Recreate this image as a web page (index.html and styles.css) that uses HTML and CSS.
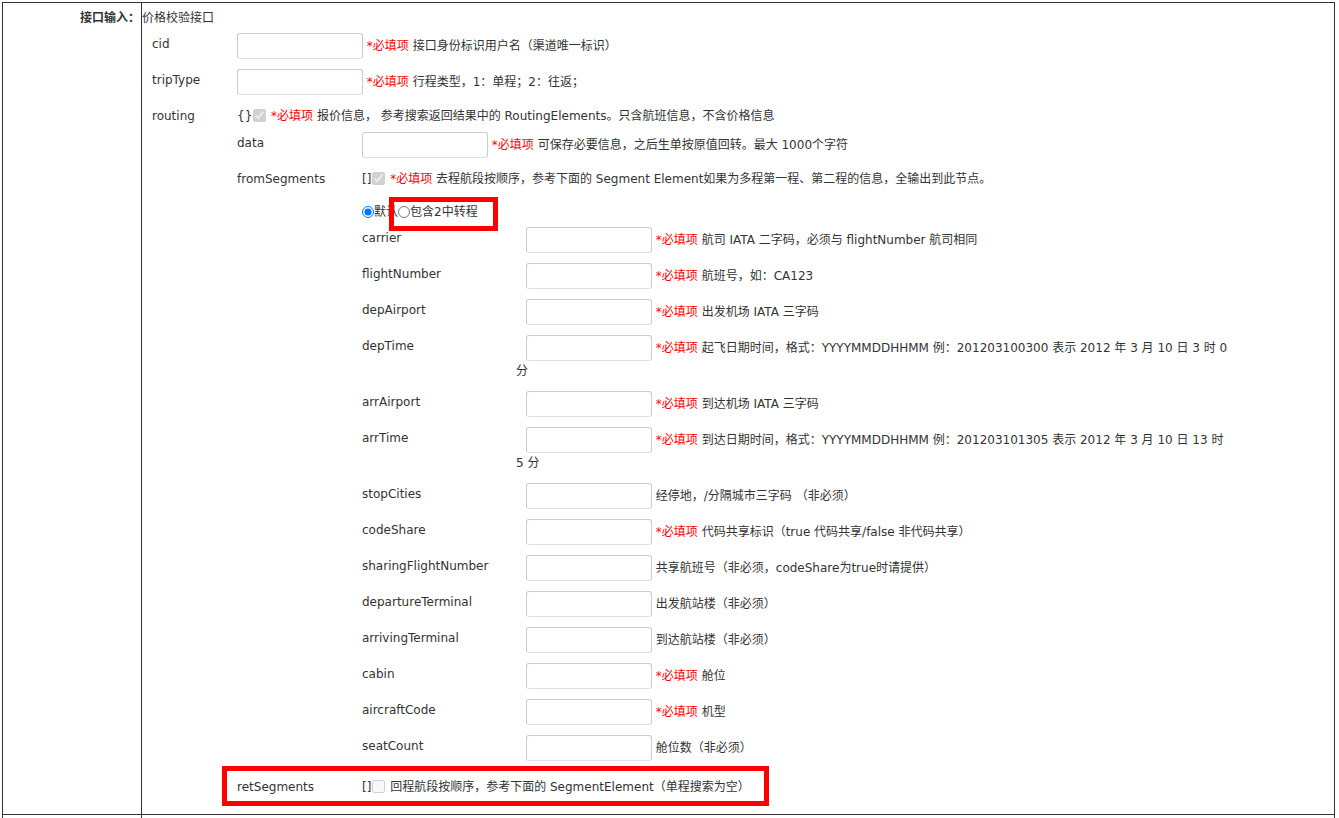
FILE: index.html
```html
<!DOCTYPE html>
<html lang="zh-CN">
<head>
  <meta charset="UTF-8">
  <title>接口输入 - 价格校验接口</title>
  <link rel="stylesheet" href="styles.css">
</head>
<body>
  <div class="form-table">
    <div class="form-row">
      <div class="form-label">接口输入：</div>
      <div class="form-value">
        <div class="title">价格校验接口</div>

        <!-- top level params -->
        <div class="fields">
          <div class="field">
            <div class="field-name">cid</div>
            <div class="field-value"><input type="text" class="txt"> <span class="req">*必填项</span> 接口身份标识用户名（渠道唯一标识）</div>
          </div>
          <div class="field">
            <div class="field-name">tripType</div>
            <div class="field-value"><input type="text" class="txt"> <span class="req">*必填项</span> 行程类型，1：单程；2：往返；</div>
          </div>
          <div class="field">
            <div class="field-name">routing</div>
            <div class="field-value">
              <div class="head">{}<input type="checkbox" class="chk" checked disabled> <span class="req">*必填项</span> 报价信息， 参考搜索返回结果中的 RoutingElements。只含航班信息，不含价格信息</div>

              <!-- routing element -->
              <div class="fields sub">
                <div class="field">
                  <div class="field-name">data</div>
                  <div class="field-value"><input type="text" class="txt"> <span class="req">*必填项</span> 可保存必要信息，之后生单按原值回转。最大 1000个字符</div>
                </div>
                <div class="field">
                  <div class="field-name">fromSegments</div>
                  <div class="field-value">
                    <div class="head">[]<input type="checkbox" class="chk" checked disabled> <span class="req">*必填项</span> 去程航段按顺序，参考下面的 Segment Element如果为多程第一程、第二程的信息，全输出到此节点。</div>
                    <div class="radios">
                      <label class="opt"><input type="radio" name="seg" class="rad" checked>默认</label><label class="opt marked"><input type="radio" name="seg" class="rad">包含2中转程</label>
                    </div>

                    <!-- segment element -->
                    <div class="fields seg">
                      <div class="field">
                        <div class="field-name">carrier</div>
                        <div class="field-value"><input type="text" class="txt"> <span class="req">*必填项</span> 航司 IATA 二字码，必须与 flightNumber 航司相同</div>
                      </div>
                      <div class="field">
                        <div class="field-name">flightNumber</div>
                        <div class="field-value"><input type="text" class="txt"> <span class="req">*必填项</span> 航班号，如：CA123</div>
                      </div>
                      <div class="field">
                        <div class="field-name">depAirport</div>
                        <div class="field-value"><input type="text" class="txt"> <span class="req">*必填项</span> 出发机场 IATA 三字码</div>
                      </div>
                      <div class="field">
                        <div class="field-name">depTime</div>
                        <div class="field-value"><input type="text" class="txt"> <span class="req">*必填项</span> 起飞日期时间，格式：YYYYMMDDHHMM 例：201203100300 表示 2012 年 3 月 10 日 3 时 0 分</div>
                      </div>
                      <div class="field">
                        <div class="field-name">arrAirport</div>
                        <div class="field-value"><input type="text" class="txt"> <span class="req">*必填项</span> 到达机场 IATA 三字码</div>
                      </div>
                      <div class="field">
                        <div class="field-name">arrTime</div>
                        <div class="field-value"><input type="text" class="txt"> <span class="req">*必填项</span> 到达日期时间，格式：YYYYMMDDHHMM 例：201203101305 表示 2012 年 3 月 10 日 13 时 5 分</div>
                      </div>
                      <div class="field">
                        <div class="field-name">stopCities</div>
                        <div class="field-value"><input type="text" class="txt"> 经停地，/分隔城市三字码 （非必须）</div>
                      </div>
                      <div class="field">
                        <div class="field-name">codeShare</div>
                        <div class="field-value"><input type="text" class="txt"> <span class="req">*必填项</span> 代码共享标识（true 代码共享/false 非代码共享）</div>
                      </div>
                      <div class="field">
                        <div class="field-name">sharingFlightNumber</div>
                        <div class="field-value"><input type="text" class="txt"> 共享航班号（非必须，codeShare为true时请提供）</div>
                      </div>
                      <div class="field">
                        <div class="field-name">departureTerminal</div>
                        <div class="field-value"><input type="text" class="txt"> 出发航站楼（非必须）</div>
                      </div>
                      <div class="field">
                        <div class="field-name">arrivingTerminal</div>
                        <div class="field-value"><input type="text" class="txt"> 到达航站楼（非必须）</div>
                      </div>
                      <div class="field">
                        <div class="field-name">cabin</div>
                        <div class="field-value"><input type="text" class="txt"> <span class="req">*必填项</span> 舱位</div>
                      </div>
                      <div class="field">
                        <div class="field-name">aircraftCode</div>
                        <div class="field-value"><input type="text" class="txt"> <span class="req">*必填项</span> 机型</div>
                      </div>
                      <div class="field">
                        <div class="field-name">seatCount</div>
                        <div class="field-value"><input type="text" class="txt"> 舱位数（非必须）</div>
                      </div>
                    </div>
                  </div>
                </div>
                <div class="field ret">
                  <div class="field-name">retSegments</div>
                  <div class="field-value">
                    <div class="head">[]<input type="checkbox" class="chk" disabled> 回程航段按顺序，参考下面的 SegmentElement（单程搜索为空）</div>
                  </div>
                </div>
              </div>
            </div>
          </div>
        </div>
      </div>
    </div>
    <div class="form-row">
      <div class="form-label"></div>
      <div class="form-value"></div>
    </div>
  </div>
</body>
</html>
```

FILE: styles.css
```css
/* General */
body {
  margin: 0;
  font-family: "DejaVu Sans", "Noto Sans CJK SC", sans-serif;
  font-size: 12px;
  line-height: 16px;
  color: #333;
  background: #fff;
  text-spacing-trim: space-all;
}

/* Outer table */
.form-table {
  width: 1333px;
  margin: 2px 0 0 2px;
  border: 1px solid #333;
  border-bottom: none;
  box-sizing: border-box;
}

.form-row {
  display: grid;
  grid-template-columns: 139px 1fr;
  min-height: 30px;
  border-bottom: 1px solid #333;
}

.form-label {
  border-right: 1px solid #333;
  text-align: right;
  font-weight: bold;
  padding: 7px 1px 0 0;
}

.form-value {
  padding: 7px 0 16px 0;
}

/* Field lists */
.fields {
  display: flex;
  flex-direction: column;
  gap: 10px;
  margin-top: 7px;
  padding-left: 10px;
}

.field {
  display: flex;
  align-items: flex-start;
}

.field-name {
  width: 85px;
  flex: none;
  padding-top: 3px;
}

.field-value {
  flex: 1;
}

.fields.sub {
  margin-top: 5px;
  padding-left: 0;
}

.fields.sub > .field > .field-name {
  width: 125px;
}

.fields.seg {
  margin-top: 4px;
  padding-left: 0;
}

.fields.seg .field-name {
  width: 154px;
}

.fields.seg .field-value {
  flex: none;
  width: 718px;
  line-height: 20px;
}

.fields.seg .txt {
  margin-left: 10px;
}

/* Inputs */
.txt {
  width: 126px;
  height: 26px;
  box-sizing: border-box;
  margin: 0;
  padding: 0 4px;
  border: 1px solid #ccc;
  border-bottom-color: #dde1e6;
  border-radius: 3px;
  font: inherit;
  vertical-align: middle;
}

.req {
  color: #f00;
}

.head {
  line-height: 22px;
}

.chk {
  width: 13px;
  height: 13px;
  margin: 0 1px 0 1px;
  vertical-align: -2px;
}

.radios {
  margin-top: 11px;
  line-height: 22px;
}

.opt {
  display: inline-block;
  position: relative;
}

.rad {
  width: 12px;
  height: 12px;
  margin: 0;
  vertical-align: -2px;
}

/* Red annotation boxes */
.opt.marked::after {
  content: "";
  position: absolute;
  top: -4px;
  left: -9px;
  width: 109px;
  height: 34px;
  border: 5px solid #f00;
  box-sizing: border-box;
}

.field.ret {
  position: relative;
  margin-top: 5px;
}

.field.ret::after {
  content: "";
  position: absolute;
  top: -10px;
  left: -15px;
  width: 547px;
  height: 40px;
  border: 5px solid #f00;
  box-sizing: border-box;
}
```
